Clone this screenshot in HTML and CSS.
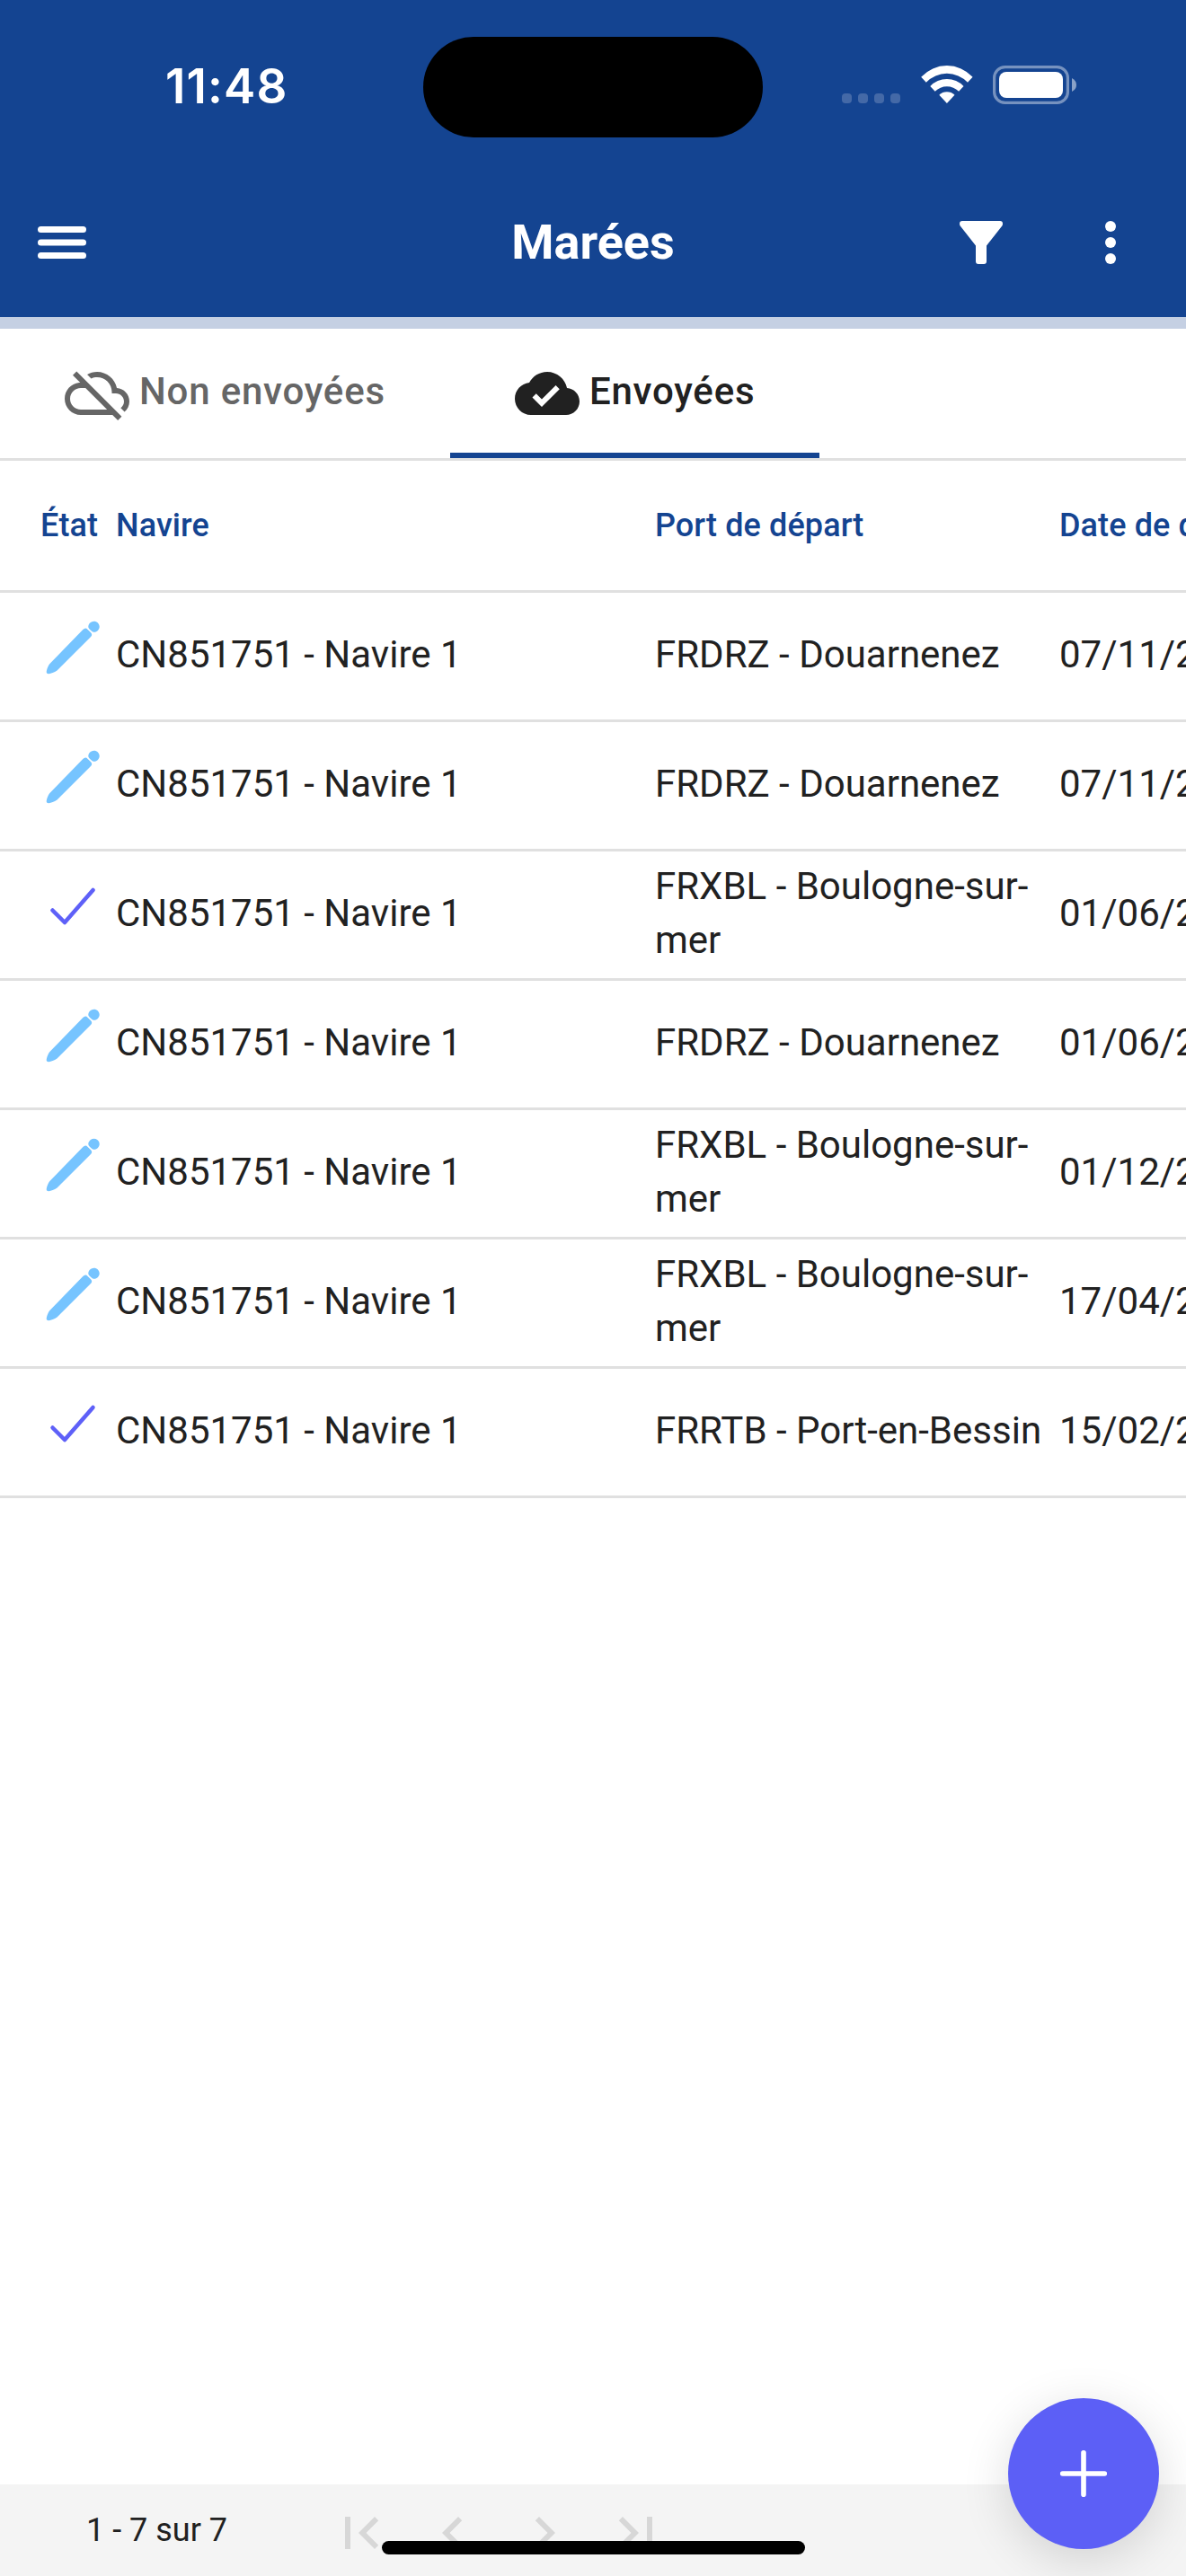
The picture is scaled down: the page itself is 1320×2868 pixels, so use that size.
FILE: index.html
```html
<!DOCTYPE html>
<html lang="fr">
<head>
<meta charset="utf-8">
<title>Marées</title>
<link rel="stylesheet" href="styles.css">
</head>
<body>
<svg class="defs" width="0" height="0">
  <symbol id="pencil" viewBox="0 0 72 72"><path d="M6.800 63.800C6.500 61.500 8.300 56.500 10.400 53.900L47.300 16.100Q50 13.200 52.700 15.900L55.800 19Q58.600 21.700 55.800 24.300L18.500 61.600C15.500 63.700 11.500 65 9.500 65.200 8 65.300 7 64.900 6.800 63.800z"/><path d="M53.800 14.600C52 11 55.500 6.700 59.600 6.700c3.400 0 6.100 2.700 6.100 6.100 0 3.800-4.200 7.300-7.600 5.600-1.700-1-3.300-2.300-4.300-3.800z"/></symbol>
  <symbol id="check" viewBox="0 0 512 512"><path d="M416 128L192 384l-96-96" fill="none" stroke="currentColor" stroke-width="32" stroke-linecap="round" stroke-linejoin="round"/></symbol>
</svg>
<div class="app">
  <header class="header">
    <div class="status">
      <div class="time">11:48</div>
      <div class="island"></div>
      <div class="signals">
        <svg width="65" height="43" viewBox="0 0 65 43" fill="#4469a7"><rect x="0" y="31" width="11" height="11" rx="4"/><rect x="18" y="31" width="11" height="11" rx="4"/><rect x="36" y="31" width="11" height="11" rx="4"/><rect x="54" y="31" width="11" height="11" rx="4"/></svg>
        <svg class="wifi" width="58" height="43" viewBox="0 0 58 43" fill="#fff"><path d="M.2 12.700A39 39 0 0 1 57.600 12.700L52 18.700A32 32 0 0 0 5.800 18.700z"/><path d="M10.300 23A25.500 25.500 0 0 1 47.500 23L42.100 28.700A19 19 0 0 0 15.700 28.700z"/><path d="M20.300 32.700A12.500 12.500 0 0 1 37.500 32.700L28.900 42z"/></svg>
        <svg class="battery" width="94" height="43" viewBox="0 0 94 43"><rect x="1.600" y="1.600" width="81.800" height="39.800" rx="12" fill="none" stroke="#fff" stroke-opacity=".42" stroke-width="3.200"/><rect x="7" y="7" width="71" height="29" rx="8" fill="#fff"/><path d="M88 14q5 2.500 5 7.500t-5 7.500z" fill="#fff" fill-opacity=".5"/></svg>
      </div>
    </div>
    <div class="toolbar">
      <svg width="54" height="36" viewBox="0 0 54 36" fill="#fff"><rect y="0" width="54" height="7" rx="3.500"/><rect y="14.500" width="54" height="7" rx="3.500"/><rect y="29" width="54" height="7" rx="3.500"/></svg>
      <h1 class="title">Marées</h1>
      <div class="actions">
        <svg width="48" height="48" viewBox="0 0 48 48" fill="#fff"><path d="M3 0h42q3 0 3 3 0 1.500-.7 2.500L30 27.500V45q0 3-3 3h-6q-3 0-3-3V27.500L.7 5.500Q0 4.500 0 3 0 0 3 0z"/></svg>
        <svg width="12" height="48" viewBox="0 0 12 48" fill="#fff"><circle cx="6" cy="6" r="6"/><circle cx="6" cy="24" r="6"/><circle cx="6" cy="42" r="6"/></svg>
      </div>
    </div>
  </header>
  <div class="strip"></div>
  <nav class="tabs">
    <div class="tab"><svg width="72" height="72" viewBox="0 0 24 24" fill="currentColor"><path d="M24 15c0-2.640-2.050-4.780-4.650-4.960C18.670 6.590 15.640 4 12 4c-1.330 0-2.570.36-3.650.97l1.490 1.490C10.510 6.170 11.230 6 12 6c3.040 0 5.500 2.460 5.500 5.500v.5H19c1.660 0 3 1.340 3 3 0 .99-.48 1.850-1.210 2.400l1.410 1.410C23.290 17.890 24 16.540 24 15zM4.410 3.860L3 5.270l2.770 2.770h-.42C2.340 8.360 0 10.910 0 14c0 3.310 2.690 6 6 6h11.730l2 2 1.410-1.410L4.410 3.860zM6 18c-2.210 0-4-1.790-4-4s1.790-4 4-4h1.730l8 8H6z"/></svg><span>Non envoyées</span></div>
    <div class="tab active"><svg width="72" height="72" viewBox="0 0 24 24" fill="currentColor"><path d="M19.350 10.040C18.670 6.590 15.640 4 12 4 9.110 4 6.600 5.640 5.350 8.040 2.340 8.360 0 10.910 0 14c0 3.310 2.690 6 6 6h13c2.760 0 5-2.240 5-5 0-2.640-2.050-4.780-4.650-4.960zM10 17l-3.500-3.500 1.410-1.410L10 14.170 15.180 9l1.410 1.410L10 17z"/></svg><span>Envoyées</span></div>
  </nav>
  <main class="table">
    <div class="row head"><div>État</div><div>Navire</div><div>Port de départ</div><div>Date de départ</div></div>
    <div class="row"><svg class="state edit"><use href="#pencil"/></svg><div>CN851751 - Navire 1</div><div>FRDRZ - Douarnenez</div><div>07/11/2023</div></div>
    <div class="row"><svg class="state edit"><use href="#pencil"/></svg><div>CN851751 - Navire 1</div><div>FRDRZ - Douarnenez</div><div>07/11/2023</div></div>
    <div class="row"><svg class="state done"><use href="#check"/></svg><div>CN851751 - Navire 1</div><div>FRXBL - Boulogne-sur-mer</div><div>01/06/2023</div></div>
    <div class="row"><svg class="state edit"><use href="#pencil"/></svg><div>CN851751 - Navire 1</div><div>FRDRZ - Douarnenez</div><div>01/06/2023</div></div>
    <div class="row"><svg class="state edit"><use href="#pencil"/></svg><div>CN851751 - Navire 1</div><div>FRXBL - Boulogne-sur-mer</div><div>01/12/2022</div></div>
    <div class="row"><svg class="state edit"><use href="#pencil"/></svg><div>CN851751 - Navire 1</div><div>FRXBL - Boulogne-sur-mer</div><div>17/04/2022</div></div>
    <div class="row"><svg class="state done"><use href="#check"/></svg><div>CN851751 - Navire 1</div><div>FRRTB - Port-en-Bessin</div><div>15/02/2022</div></div>
  </main>
  <footer class="paginator">
    <div class="range">1 - 7 sur 7</div>
    <div class="pages">
      <svg viewBox="0 0 24 24"><path d="M18.410 16.590L13.820 12l4.590-4.590L17 6l-6 6 6 6zM6 6h2v12H6z"/></svg>
      <svg viewBox="0 0 24 24"><path d="M15.410 7.410L14 6l-6 6 6 6 1.410-1.410L10.830 12z"/></svg>
      <svg viewBox="0 0 24 24"><path d="M10 6L8.590 7.410 13.170 12l-4.580 4.590L10 18l6-6z"/></svg>
      <svg viewBox="0 0 24 24"><path d="M5.590 7.410L10.180 12l-4.590 4.590L7 18l6-6-6-6zM16 6h2v12h-2z"/></svg>
    </div>
  </footer>
  <div class="home-bar"></div>
  <div class="fab"><svg width="54" height="54" viewBox="0 0 54 54"><path d="M27 3.700v46.600M3.700 27h46.600" stroke="#fff" stroke-width="5.600" stroke-linecap="round"/></svg></div>
</div>
</body>
</html>
```
FILE: styles.css
```css
* { box-sizing: border-box; }
body { margin: 0; background: #fff; font-family: Roboto, sans-serif; color: #212121; }
svg { display: block; flex: none; }
.defs { position: absolute; }
.app { position: relative; width: 1320px; height: 2868px; overflow: hidden; display: flex; flex-direction: column; }
.header { height: 353px; background: #144491; color: #fff; flex: none; }
.status { height: 186px; display: grid; grid-template-columns: 471px 378px 471px; }
.time { padding: 60px 0 0 184px; font: 600 53px/72px Inter, sans-serif; letter-spacing: 1.1px; }
.island { margin-top: 41px; height: 112px; border-radius: 56px; background: #000; }
.signals { display: flex; padding: 73px 0 0 88px; }
.wifi { margin-left: 23px; }
.battery { margin-left: 22px; }
.toolbar { height: 168px; display: grid; grid-template-columns: 1fr auto 1fr; align-items: center; padding: 0 78px 0 42px; }
.title { margin: 0; font-size: 54px; line-height: 60px; font-weight: 700; margin-left: 36px; }
.actions { display: flex; justify-content: flex-end; gap: 114px; }
.strip { height: 13px; background: #c5d0e3; flex: none; }
.tabs { display: flex; height: 147px; border-bottom: 3px solid #e0e0e0; flex: none; }
.tab { display: flex; align-items: center; padding: 0 72px; color: #666; font-size: 42px; font-weight: 500; letter-spacing: 0.8px; gap: 11px; height: 144px; line-height: 54px; }
.tab span { padding-bottom: 4px; }
.active { color: #212121; border-bottom: 6px solid #144491; padding-top: 6px; }
.table { flex: 1; }
.row { display: grid; grid-template-columns: 84px 600px 450px 400px; height: 144px; padding-left: 45px; border-bottom: 3px solid #e0e0e0; align-items: center; font-size: 42px; line-height: 60px; }
.row div { padding-bottom: 4px; }
.row div:nth-child(3) { padding-right: 8px; }
.head { height: 147px; color: #144491; font-size: 36px; font-weight: 500; letter-spacing: 0.1px; }
.head div { padding-bottom: 0; }
.state { width: 72px; height: 72px; margin-bottom: 19px; }
.edit { fill: #76c4ff; }
.done { color: #5e60f8; }
.paginator { height: 102px; background: #f4f4f4; display: flex; flex: none; }
.range { padding-left: 96px; width: 366px; line-height: 102px; font-size: 36px; }
.pages { display: flex; gap: 30px; padding-top: 18px; fill: #d7d7d7; }
.pages svg { width: 72px; height: 72px; }
.home-bar { position: absolute; left: 425px; top: 2829px; width: 471px; height: 15px; border-radius: 8px; background: #000; }
.fab { position: absolute; left: 1122px; top: 2670px; width: 168px; height: 168px; border-radius: 50%; background: #5c5ff6; display: flex; align-items: center; justify-content: center; box-shadow: 0 12px 54px rgba(0,0,0,.14); }
```
